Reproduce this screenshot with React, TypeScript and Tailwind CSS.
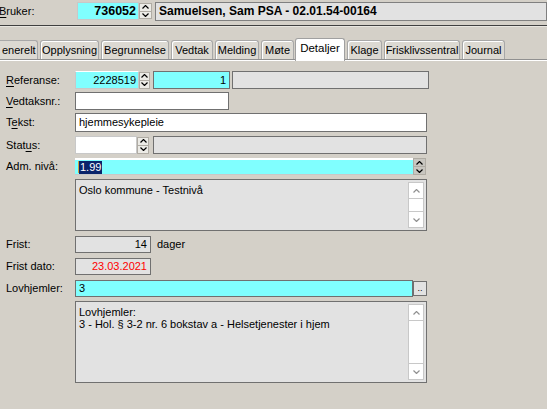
import React from "react"

function Chevron({ up, color = "#000" }: { up?: boolean; color?: string }) {
  return (
    <svg width="7" height="4" viewBox="0 0 7 4" className="block">
      {up ? (
        <path d="M0.5 3.5 L3.5 0.5 L6.5 3.5" fill="none" stroke={color} strokeWidth="1.2" />
      ) : (
        <path d="M0.5 0.5 L3.5 3.5 L6.5 0.5" fill="none" stroke={color} strokeWidth="1.2" />
      )}
    </svg>
  )
}

function Spinner({ w = 11, h = 17, dark }: { w?: number; h?: number; dark?: boolean }) {
  const bg = dark ? "bg-[#c8c6c0]" : "bg-[#ecebe6]"
  return (
    <div
      className="flex flex-col shrink-0 bg-[#d4d0c8] border border-[#b0aca4]"
      style={{ width: w, height: h }}
    >
      <div className={`flex-1 flex items-center justify-center ${bg} border-b border-[#b0aca4]`}>
        <Chevron up />
      </div>
      <div className={`flex-1 flex items-center justify-center ${bg}`}>
        <Chevron />
      </div>
    </div>
  )
}

function ScrollBar() {
  return (
    <div className="absolute right-[2px] top-[2px] bottom-[2px] w-[16px] flex flex-col bg-white border border-[#c8c8c8]">
      <div className="h-[16px] flex items-center justify-center border-b border-[#c8c8c8]">
        <Chevron up color="#909090" />
      </div>
      <div className="flex-1" />
      <div className="h-[16px] flex items-center justify-center border-t border-[#c8c8c8]">
        <Chevron color="#909090" />
      </div>
    </div>
  )
}

function Label({ pre = "", u = "", post = "" }: { pre?: string; u?: string; post?: string }) {
  return (
    <div className="w-[75px] shrink-0 pl-[6px] whitespace-nowrap">
      {pre}
      {u && <span className="underline underline-offset-2">{u}</span>}
      {post}
    </div>
  )
}

const tabs = [
  { name: "Opplysning", w: 59 },
  { name: "Begrunnelse", w: 68 },
  { name: "Vedtak", w: 42 },
  { name: "Melding", w: 44 },
  { name: "Møte", w: 33 },
]
const tabsAfter = [
  { name: "Klage", w: 35 },
  { name: "Frisklivssentral", w: 76 },
  { name: "Journal", w: 43 },
]

function Tab({ name, w }: { name: string; w: number }) {
  return (
    <div
      className="h-[19px] ml-[2px] flex items-center justify-center border border-b-0 border-[#a8a8a8] rounded-t-[3px] bg-[#dcd9d2] shadow-[inset_1px_1px_0_#ffffff]"
      style={{ width: w }}
    >
      {name}
    </div>
  )
}

export default function App() {
  return (
    <div
      className="w-[547px] h-[409px] overflow-hidden bg-[#d4d0c8] text-[11px] text-black leading-none"
      style={{ fontFamily: '"Liberation Sans", Arial, sans-serif' }}
    >
      {/* Bruker header */}
      <div className="flex items-center h-[18px] mt-[2px]">
        <div className="w-[78px] shrink-0 -ml-[1px]">
          <span className="underline underline-offset-2">B</span>ruker:
        </div>
        <div className="w-[62px] h-[18px] flex items-center justify-end pr-[2px] bg-[#80ffff] border border-[#c8c8c8] font-bold text-[12.5px]">
          736052
        </div>
        <Spinner w={13} h={16} />
        <div className="ml-[3px] flex-1 h-[19px] flex items-center pl-[3px] bg-[#e2e2e2] border border-[#808080] font-bold text-[12px] whitespace-nowrap">
          Samuelsen, Sam PSA - 02.01.54-00164
        </div>
      </div>
      <div className="mt-[5px] h-[1px] bg-[#404040]" />
      <div className="h-[1px] bg-[#e8e6e0]" />

      {/* Tabs */}
      <div className="mt-[10px] flex items-end h-[22px]">
        <div className="w-[38px] h-[19px] flex items-center pl-[2px] border border-l-0 border-b-0 border-[#a8a8a8] rounded-tr-[3px] bg-[#dcd9d2]">
          enerelt
        </div>
        {tabs.map((t) => (
          <Tab key={t.name} {...t} />
        ))}
        <div className="w-[50px] h-[23px] ml-[1px] -mb-[2px] z-10 flex items-center justify-center pb-[2px] text-[11.5px] border border-b-0 border-[#a0a0a0] rounded-t-[3px] bg-white">
          Detaljer
        </div>
        {tabsAfter.map((t) => (
          <Tab key={t.name} {...t} />
        ))}
      </div>
      <div className="h-[1px] bg-[#909090]" />
      <div className="h-[1px] bg-white" />

      {/* Form */}
      <div className="flex flex-col">
        <div className="flex items-center mt-[10px] h-[18px]">
          <Label u="R" post="eferanse:" />
          <div className="w-[64px] h-[18px] flex items-center justify-end pr-[2px] bg-[#80ffff] border border-[#c8c8c8] border-t-white">
            2228519
          </div>
          <Spinner w={11} h={17} />
          <div className="ml-[3px] w-[77px] h-[18px] flex items-center justify-end pr-[3px] bg-[#80ffff] border border-[#707070]">
            1
          </div>
          <div className="ml-[2px] w-[197px] h-[18px] bg-[#e2e2e2] border border-[#707070]" />
        </div>

        <div className="flex items-center mt-[3px] h-[18px]">
          <Label u="V" post="edtaksnr.:" />
          <div className="w-[154px] h-[18px] bg-white border border-[#707070]" />
        </div>

        <div className="flex items-center mt-[3px] h-[19px]">
          <Label pre="T" u="e" post="kst:" />
          <div className="w-[352px] h-[19px] flex items-center pl-[3px] bg-white border border-[#707070]">
            hjemmesykepleie
          </div>
        </div>

        <div className="flex items-center mt-[4px] h-[18px]">
          <Label pre="Stat" u="u" post="s:" />
          <div className="w-[62px] h-[18px] bg-white border border-[#c8c8c8]" />
          <Spinner w={12} h={17} />
          <div className="ml-[4px] w-[274px] h-[18px] bg-[#e2e2e2] border border-[#707070]" />
        </div>

        <div className="flex items-center mt-[4px] h-[17px]">
          <Label pre="Adm. nivå:" />
          <div className="w-[338px] h-[17px] flex items-center pl-[3px] bg-[#80ffff] border-t-2 border-white border-b border-b-[#c8c8c8]">
            <span className="w-[1px] h-[12px] bg-[#d0a040]" />
            <span className="bg-[#0a246a] text-white px-[1px] py-[1px]">1.99</span>
          </div>
          <Spinner w={13} h={17} dark />
        </div>

        <div className="flex mt-[4px]">
          <div className="w-[75px] shrink-0" />
          <div className="relative w-[352px] h-[52px] pl-[3px] pt-[5px] bg-[#e2e2e2] border border-[#707070]">
            Oslo kommune - Testnivå
            <ScrollBar />
          </div>
        </div>

        <div className="flex items-center mt-[5px] h-[17px]">
          <Label pre="Frist:" />
          <div className="w-[76px] h-[17px] flex items-center justify-end pr-[3px] bg-[#e2e2e2] border border-[#707070]">
            14
          </div>
          <div className="ml-[6px]">dager</div>
        </div>

        <div className="flex items-center mt-[5px] h-[17px]">
          <Label pre="Frist dato:" />
          <div className="w-[76px] h-[17px] flex items-center justify-end pr-[3px] bg-[#e2e2e2] border border-[#707070] text-[#ff0000]">
            23.03.2021
          </div>
        </div>

        <div className="flex items-center mt-[5px] h-[17px]">
          <Label pre="Lovhjemler:" />
          <div className="w-[338px] h-[17px] flex items-center pl-[3px] bg-[#80ffff] border border-[#707070]">
            3
          </div>
          <div className="w-[14px] h-[15px] flex items-end justify-center pb-[2px] bg-[#e2e2e2] border border-[#707070] text-[9px] leading-none">
            ..
          </div>
        </div>

        <div className="flex mt-[4px]">
          <div className="w-[75px] shrink-0" />
          <div className="relative w-[352px] h-[82px] pl-[3px] pt-[4px] bg-[#e2e2e2] border border-[#707070] leading-[12px]">
            <div>Lovhjemler:</div>
            <div>3 - Hol. § 3-2 nr. 6 bokstav a - Helsetjenester i hjem</div>
            <ScrollBar />
          </div>
        </div>
      </div>
    </div>
  )
}
